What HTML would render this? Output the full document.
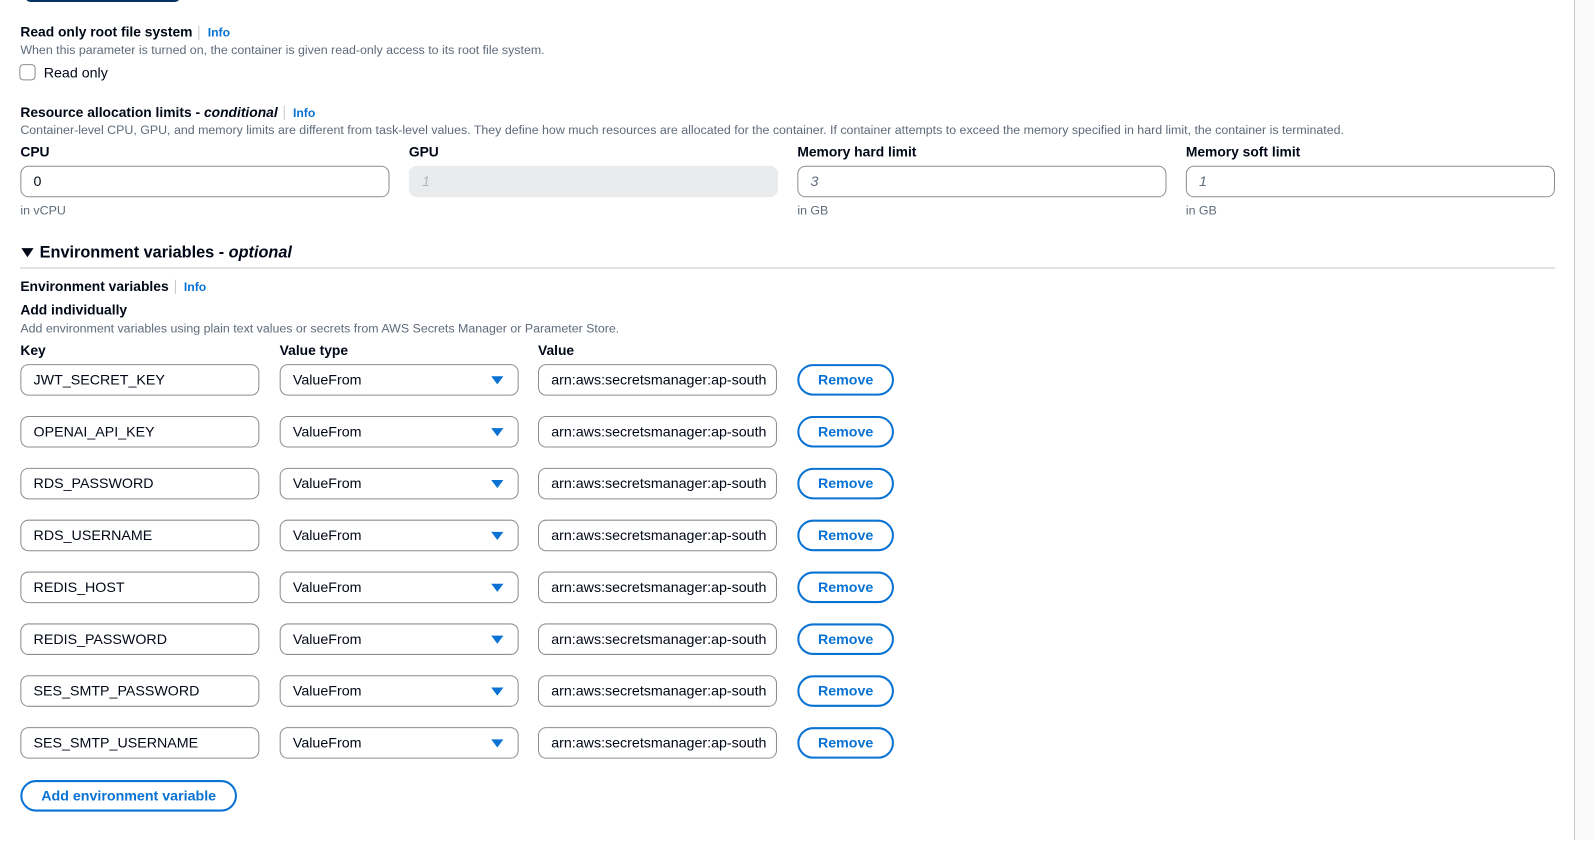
<!DOCTYPE html>
<html><head><style>
*{box-sizing:border-box;margin:0;padding:0}
body{width:1594px;height:840px;background:#fff;font-family:"Liberation Sans",Arial,sans-serif;color:#000716;position:relative;overflow:hidden}
#w{position:absolute;left:0;top:0;width:1560px;height:830px;transform:scale(1.017);transform-origin:0 0}
.a{position:absolute;white-space:nowrap}
.t{font-weight:bold;font-size:13.6px}
.d{font-size:12.2px;color:#5f6b7a}
.info{font-weight:bold;font-size:12px;color:#0972d3;border-left:1px solid #c6c6cd;padding-left:8px;margin-left:6px}
.in{position:absolute;height:31px;border:1px solid #8c8c94;border-radius:8px;font-size:14px;padding:0 12px;line-height:29px;background:#fff;white-space:nowrap;overflow:hidden}
.btn{position:absolute;height:31px;border:2px solid #0972d3;border-radius:16px;color:#0972d3;font-weight:bold;font-size:14px;text-align:center;line-height:27px;white-space:nowrap}
.tri{position:absolute;right:14px;top:11px;width:0;height:0;border-left:6px solid transparent;border-right:6px solid transparent;border-top:8px solid #0972d3}
</style></head><body>
<div class="a" style="left:1574px;top:0;width:20px;height:840px;background:#fafafa;border-left:1px solid #c6c6cd"></div>
<div id="w">
<div class="a" style="left:25px;top:-8px;width:152px;height:10px;background:#033160;border-radius:6px"></div>

<div class="a t" style="left:20px;top:24px">Read only root file system<span class="info">Info</span></div>
<div class="a d" style="left:20px;top:42px">When this parameter is turned on, the container is given read-only access to its root file system.</div>
<div class="a" style="left:19px;top:63px;width:16px;height:16px;border:1px solid #8c8c94;border-radius:4px"></div>
<div class="a" style="left:43px;top:63px;font-size:14px">Read only</div>

<div class="a t" style="left:20px;top:103px">Resource allocation limits - <i>conditional</i><span class="info">Info</span></div>
<div class="a d" style="left:20px;top:121px">Container-level CPU, GPU, and memory limits are different from task-level values. They define how much resources are allocated for the container. If container attempts to exceed the memory specified in hard limit, the container is terminated.</div>
<div class="a t" style="left:20px;top:142px">CPU</div>
<div class="a t" style="left:402px;top:142px">GPU</div>
<div class="a t" style="left:784px;top:142px">Memory hard limit</div>
<div class="a t" style="left:1166px;top:142px">Memory soft limit</div>
<div class="in" style="left:20px;top:163px;width:363px">0</div>
<div class="in" style="left:402px;top:163px;width:363px;background:#e9ebed;border-color:#e9ebed;color:#b4b4bb;font-style:italic">1</div>
<div class="in" style="left:784px;top:163px;width:363px;color:#5f6b7a;font-style:italic">3</div>
<div class="in" style="left:1166px;top:163px;width:363px;color:#5f6b7a;font-style:italic">1</div>
<div class="a d" style="left:20px;top:200px">in vCPU</div>
<div class="a d" style="left:784px;top:200px">in GB</div>
<div class="a d" style="left:1166px;top:200px">in GB</div>

<div class="a" style="left:21px;top:244px;width:0;height:0;border-left:6px solid transparent;border-right:6px solid transparent;border-top:9px solid #000716"></div>
<div class="a" style="left:39px;top:240px;font-size:16px;font-weight:bold">Environment variables - <i>optional</i></div>
<div class="a" style="left:20px;top:263px;width:1509px;height:1px;background:#c6c6cd"></div>
<div class="a t" style="left:20px;top:274px">Environment variables<span class="info">Info</span></div>
<div class="a t" style="left:20px;top:297px">Add individually</div>
<div class="a d" style="left:20px;top:316px">Add environment variables using plain text values or secrets from AWS Secrets Manager or Parameter Store.</div>
<div class="a t" style="left:20px;top:337px">Key</div>
<div class="a t" style="left:275px;top:337px">Value type</div>
<div class="a t" style="left:529px;top:337px">Value</div>

<div class="in" style="left:20px;top:358px;width:235px">JWT_SECRET_KEY</div><div class="in" style="left:275px;top:358px;width:235px">ValueFrom<span class="tri"></span></div><div class="in" style="left:529px;top:358px;width:235px">arn:aws:secretsmanager:ap-south</div><div class="btn" style="left:784px;top:358px;width:95px">Remove</div>
<div class="in" style="left:20px;top:409px;width:235px">OPENAI_API_KEY</div><div class="in" style="left:275px;top:409px;width:235px">ValueFrom<span class="tri"></span></div><div class="in" style="left:529px;top:409px;width:235px">arn:aws:secretsmanager:ap-south</div><div class="btn" style="left:784px;top:409px;width:95px">Remove</div>
<div class="in" style="left:20px;top:460px;width:235px">RDS_PASSWORD</div><div class="in" style="left:275px;top:460px;width:235px">ValueFrom<span class="tri"></span></div><div class="in" style="left:529px;top:460px;width:235px">arn:aws:secretsmanager:ap-south</div><div class="btn" style="left:784px;top:460px;width:95px">Remove</div>
<div class="in" style="left:20px;top:511px;width:235px">RDS_USERNAME</div><div class="in" style="left:275px;top:511px;width:235px">ValueFrom<span class="tri"></span></div><div class="in" style="left:529px;top:511px;width:235px">arn:aws:secretsmanager:ap-south</div><div class="btn" style="left:784px;top:511px;width:95px">Remove</div>
<div class="in" style="left:20px;top:562px;width:235px">REDIS_HOST</div><div class="in" style="left:275px;top:562px;width:235px">ValueFrom<span class="tri"></span></div><div class="in" style="left:529px;top:562px;width:235px">arn:aws:secretsmanager:ap-south</div><div class="btn" style="left:784px;top:562px;width:95px">Remove</div>
<div class="in" style="left:20px;top:613px;width:235px">REDIS_PASSWORD</div><div class="in" style="left:275px;top:613px;width:235px">ValueFrom<span class="tri"></span></div><div class="in" style="left:529px;top:613px;width:235px">arn:aws:secretsmanager:ap-south</div><div class="btn" style="left:784px;top:613px;width:95px">Remove</div>
<div class="in" style="left:20px;top:664px;width:235px">SES_SMTP_PASSWORD</div><div class="in" style="left:275px;top:664px;width:235px">ValueFrom<span class="tri"></span></div><div class="in" style="left:529px;top:664px;width:235px">arn:aws:secretsmanager:ap-south</div><div class="btn" style="left:784px;top:664px;width:95px">Remove</div>
<div class="in" style="left:20px;top:715px;width:235px">SES_SMTP_USERNAME</div><div class="in" style="left:275px;top:715px;width:235px">ValueFrom<span class="tri"></span></div><div class="in" style="left:529px;top:715px;width:235px">arn:aws:secretsmanager:ap-south</div><div class="btn" style="left:784px;top:715px;width:95px">Remove</div>

<div class="btn" style="left:20px;top:767px;width:213px">Add environment variable</div>
</div>
</body></html>
